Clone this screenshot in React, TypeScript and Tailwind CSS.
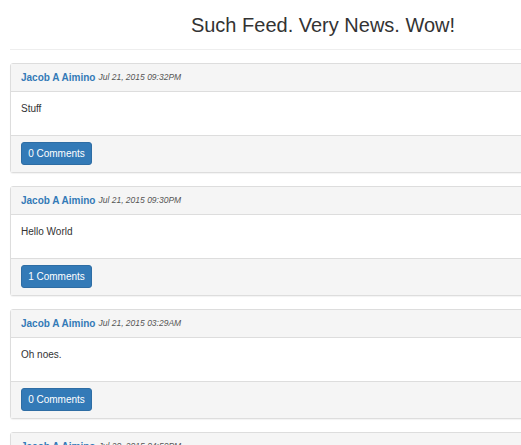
import React from "react";

const posts = [
  { name: "Jacob A Aimino", date: "Jul 21, 2015 09:32PM", body: "Stuff", comments: 0 },
  { name: "Jacob A Aimino", date: "Jul 21, 2015 09:30PM", body: "Hello World", comments: 1 },
  { name: "Jacob A Aimino", date: "Jul 21, 2015 03:29AM", body: "Oh noes.", comments: 0 },
  { name: "Jacob A Aimino", date: "Jul 20, 2015 04:50PM", body: "Test", comments: 0 },
];

export default function App() {
  return (
    <div
      className="w-[521px] h-[445px] overflow-hidden bg-white text-[#333]"
      style={{ fontFamily: '"Liberation Sans", Arial, sans-serif' }}
    >
      <div className="w-[626px] ml-[10px]">
        <h1 className="text-center text-[20px] leading-[24px] pt-[13px] pb-[12px] border-b border-[#eee]">
          Such Feed. Very News. Wow!
        </h1>
        <div className="flex flex-col gap-[13px] mt-[13px]">
          {posts.map((p, i) => (
            <div
              key={i}
              className="border border-[#ddd] rounded-[3px] shadow-[0_1px_1px_rgba(0,0,0,0.05)] bg-white"
            >
              <div className="bg-[#f5f5f5] border-b border-[#ddd] h-[28px] flex items-center px-[10px] leading-none">
                <span className="font-bold text-[#337ab7] text-[10px]">{p.name}</span>
                <span className="italic text-[#555] text-[8.5px] ml-[3px]">{p.date}</span>
              </div>
              <div className="h-[43px] px-[10px] pt-[10px] text-[10px] leading-[14px]">{p.body}</div>
              <div className="bg-[#f5f5f5] border-t border-[#ddd] h-[37px] px-[10px] pt-[6px] flex items-start">
                <button className="w-[71px] h-[23px] bg-[#337ab7] border border-[#2e6da4] rounded-[3px] text-white text-[10px] leading-none flex items-center justify-center">
                  {p.comments} Comments
                </button>
              </div>
            </div>
          ))}
        </div>
      </div>
    </div>
  );
}
